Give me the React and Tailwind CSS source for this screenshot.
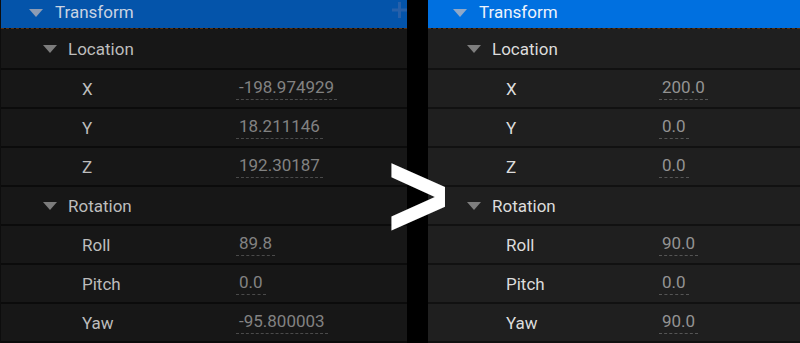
import React from "react";

const Tri = ({ className }) => (
  <svg width="14" height="8" viewBox="0 0 14 8" className={className}>
    <polygon points="0,0 14,0 7,8" fill="currentColor" />
  </svg>
);

const rows = {
  left: [
    { type: "group", label: "Location" },
    { type: "leaf", label: "X", value: "-198.974929" },
    { type: "leaf", label: "Y", value: "18.211146" },
    { type: "leaf", label: "Z", value: "192.30187" },
    { type: "group", label: "Rotation" },
    { type: "leaf", label: "Roll", value: "89.8" },
    { type: "leaf", label: "Pitch", value: "0.0" },
    { type: "leaf", label: "Yaw", value: "-95.800003" },
  ],
  right: [
    { type: "group", label: "Location" },
    { type: "leaf", label: "X", value: "200.0" },
    { type: "leaf", label: "Y", value: "0.0" },
    { type: "leaf", label: "Z", value: "0.0" },
    { type: "group", label: "Rotation" },
    { type: "leaf", label: "Roll", value: "90.0" },
    { type: "leaf", label: "Pitch", value: "0.0" },
    { type: "leaf", label: "Yaw", value: "90.0" },
  ],
};

function LeftPanel() {
  return (
    <div className="w-[407px] shrink-0 border-l border-[#0d0d0d] bg-[#0b0b0b] flex flex-col">
      <div className="h-[28px] bg-[#0454aa] flex items-center pl-[28px] pb-[4px] relative overflow-hidden">
        <Tri className="text-[#8d9cb4] mt-[2px]" />
        <span className="ml-[12px] text-[17px] leading-[20px] text-[#c9d3e2]">Transform</span>
        <svg className="absolute right-[-1px] top-[2px]" width="16" height="16" viewBox="0 0 16 16">
          <path d="M7.5 0V16M0 8H16" stroke="#2660aa" strokeWidth="3" />
        </svg>
      </div>
      <div className="h-[1px] border-b border-dashed border-[#5a3010]" />
      {rows.left.map((r, i) =>
        r.type === "group" ? (
          <div
            key={i}
            className={`${i === 0 ? "h-[39px]" : "h-[37px]"} bg-[#171717] mb-[2px] flex items-center pl-[42px]`}
          >
            <Tri className="text-[#7c7c7c] mt-[1px]" />
            <span className="ml-[11px] text-[17px] leading-[20px] text-[#bdbdbd]">{r.label}</span>
          </div>
        ) : (
          <div key={i} className="h-[37px] bg-[#171717] mb-[2px] flex items-center pl-[81px]">
            <span className="w-[154px] text-[17px] leading-[20px] text-[#bdbdbd]">{r.label}</span>
            <span className="px-[3px] pb-[2px] border-b border-dashed border-[#4a4a4a] text-[17px] leading-[20px] text-[#828282]">
              {r.value}
            </span>
          </div>
        )
      )}
    </div>
  );
}

function RightPanel() {
  return (
    <div className="w-[372px] shrink-0 bg-[#111111] flex flex-col">
      <div className="h-[28px] bg-[#0070e0] flex items-center pl-[25px] pb-[4px]">
        <Tri className="text-[#8fa8c8] mt-[2px]" />
        <span className="ml-[12px] text-[17px] leading-[20px] text-[#eef3fb]">Transform</span>
      </div>
      <div className="h-[1px] border-b border-dashed border-[#5a3010]" />
      {rows.right.map((r, i) =>
        r.type === "group" ? (
          <div
            key={i}
            className={`${i === 0 ? "h-[39px]" : "h-[37px]"} bg-[#1f1f1f] mb-[2px] flex items-center pl-[39px]`}
          >
            <Tri className="text-[#7e7e7e] mt-[1px]" />
            <span className="ml-[11px] text-[17px] leading-[20px] text-[#dcdcdc]">{r.label}</span>
          </div>
        ) : (
          <div key={i} className="h-[37px] bg-[#1f1f1f] mb-[2px] flex items-center pl-[78px]">
            <span className="w-[153px] text-[17px] leading-[20px] text-[#dcdcdc]">{r.label}</span>
            <span className="px-[3px] pb-[2px] border-b border-dashed border-[#555555] text-[17px] leading-[20px] text-[#939393]">
              {r.value}
            </span>
          </div>
        )
      )}
    </div>
  );
}

export default function App() {
  return (
    <div
      className="relative w-[800px] h-[343px] overflow-hidden bg-black flex gap-[21px]"
      style={{ fontFamily: "Roboto, 'Liberation Sans', sans-serif" }}
    >
      <LeftPanel />
      <RightPanel />
      <div
        className="absolute left-[387px] top-[133px] text-white font-bold text-[124px] leading-none scale-x-[0.86] origin-left"
        style={{ fontFamily: "'Liberation Sans', Arial, sans-serif" }}
      >
        &gt;
      </div>
    </div>
  );
}
